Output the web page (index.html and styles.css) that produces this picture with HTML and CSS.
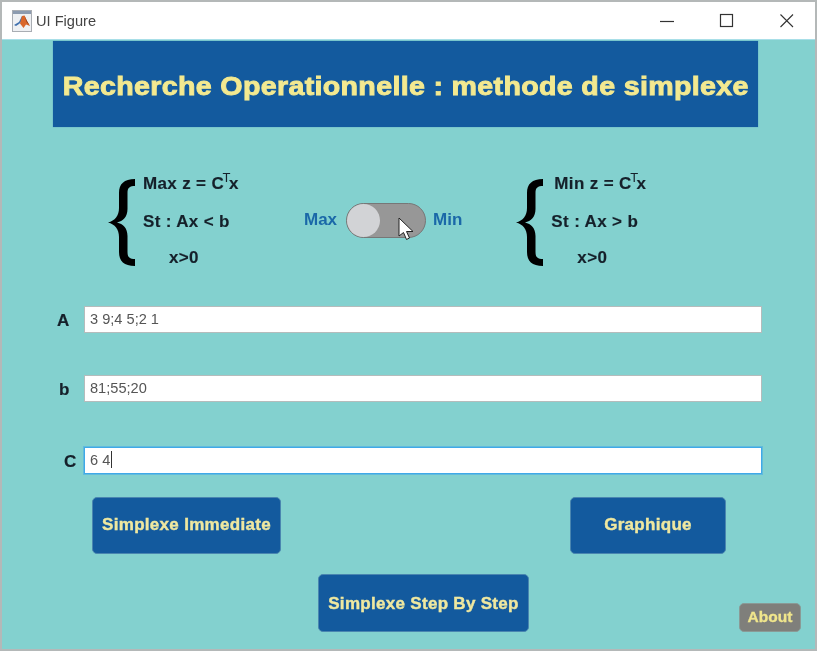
FILE: index.html
```html
<!DOCTYPE html>
<html lang="fr">
<head>
<meta charset="utf-8">
<title>UI Figure</title>
<link rel="stylesheet" href="styles.css">
</head>
<body>
<div class="window">
  <div class="titlebar">
    <svg class="app-icon" width="20" height="22" viewBox="0 0 20 22">
      <rect x="0.5" y="0.5" width="19" height="21" fill="#eef0f3" stroke="#a9adb3"/>
      <rect x="1" y="1" width="18" height="3" fill="#8c9bb0"/>
      <path d="M2 15 L7 12 L10 6 L12 9 L7 14 L4 16Z" fill="#3f6fae"/>
      <path d="M10 6 L12.5 5.5 L15 11 L18 16 L14 14.5 L11.5 18 L8 13.5Z" fill="#d9662a"/>
      <path d="M12.5 5.5 L15 11 L18 16 L14.5 12Z" fill="#8f3b16"/>
    </svg>
    <span class="title-text">UI Figure</span>
    <div class="controls">
      <svg class="ctl" width="16" height="16" viewBox="0 0 16 16"><path d="M1 8.5H15" stroke="#333" stroke-width="1.2"/></svg>
      <svg class="ctl" width="16" height="16" viewBox="0 0 16 16"><rect x="1.5" y="1.5" width="12" height="12" fill="none" stroke="#333" stroke-width="1.2"/></svg>
      <svg class="ctl" width="16" height="16" viewBox="0 0 16 16"><path d="M1.5 1.5L14 14M14 1.5L1.5 14" stroke="#333" stroke-width="1.1"/></svg>
    </div>
  </div>

  <header class="banner">
    <h1 class="banner-title">Recherche Operationnelle : methode de simplexe</h1>
  </header>

  <section class="problem">
    <div class="system system-max">
      <svg class="brace" width="29" height="91" viewBox="0 0 29 91"><path d="M28 2V9C23 9 20.5 10.5 20.5 16V32C20.5 40 16 44 10 45.5C16 47 20.5 51 20.5 59V75C20.5 80.5 23 82 28 82V89C17 89 12 84 12 75V60C12 52 8 47.5 1 45.5C8 43.5 12 39 12 31V16C12 7 17 2 28 2Z" fill="#000"/></svg>
      <div class="lines">
        <div class="line">Max z = C<sup class="sup">T</sup>x</div>
        <div class="line">St : Ax &lt; b</div>
        <div class="line line-pos">x&gt;0</div>
      </div>
    </div>
    <div class="switch-group">
      <span class="switch-label">Max</span>
      <div class="switch">
        <span class="knob"></span>
        <svg class="cursor" width="17" height="24" viewBox="0 0 17 24"><path d="M1 1V19L5.5 15.5L8.5 22.5L11.5 21L8.5 14.5H15Z" fill="#fff" stroke="#222" stroke-width="1"/></svg>
      </div>
      <span class="switch-label">Min</span>
    </div>
    <div class="system system-min">
      <svg class="brace" width="29" height="91" viewBox="0 0 29 91"><path d="M28 2V9C23 9 20.5 10.5 20.5 16V32C20.5 40 16 44 10 45.5C16 47 20.5 51 20.5 59V75C20.5 80.5 23 82 28 82V89C17 89 12 84 12 75V60C12 52 8 47.5 1 45.5C8 43.5 12 39 12 31V16C12 7 17 2 28 2Z" fill="#000"/></svg>
      <div class="lines">
        <div class="line line-first">Min z = C<sup class="sup">T</sup>x</div>
        <div class="line">St : Ax &gt; b</div>
        <div class="line line-pos">x&gt;0</div>
      </div>
    </div>
  </section>

  <section class="fields">
    <div class="field field-a"><label class="field-label label-a">A</label><div class="input">3 9;4 5;2 1</div></div>
    <div class="field field-b"><label class="field-label label-b">b</label><div class="input">81;55;20</div></div>
    <div class="field field-c"><label class="field-label label-c">C</label><div class="input input-focus">6 4<span class="caret"></span></div></div>
  </section>

  <section class="actions">
    <div class="action-row row-one">
      <button class="btn btn-immediate">Simplexe Immediate</button>
      <button class="btn btn-graph">Graphique</button>
    </div>
    <div class="action-row row-two">
      <button class="btn btn-step">Simplexe Step By Step</button>
      <button class="btn-about">About</button>
    </div>
  </section>
</div>
</body>
</html>
```
FILE: styles.css
```css
* { box-sizing: border-box; }
html, body { margin: 0; padding: 0; }
body { font-family: "Liberation Sans", Arial, sans-serif; }

.window {
  width: 817px;
  height: 651px;
  background: #83d1cf;
  border: 2px solid #b4b8b8;
  overflow: hidden;
  filter: blur(0.4px);
}

.titlebar {
  display: flex;
  align-items: center;
  height: 38px;
  background: #fff;
  border-bottom: 1px solid #a8dfe8;
  padding-left: 10px;
}
.app-icon { flex: none; }
.title-text { margin-left: 4px; font-size: 14.6px; color: #444; }
.controls { display: flex; margin-left: auto; gap: 44px; padding-right: 20px; }
.ctl { display: block; }

.banner {
  display: flex;
  align-items: center;
  justify-content: center;
  width: 705px;
  height: 86px;
  margin: 1px 0 0 51px;
  padding-top: 5px;
  background: #135a9e;
  box-shadow: 0 0 1px #4f93bb;
}
.banner-title {
  margin: 0;
  font-size: 26px;
  font-weight: 700;
  color: #f3e990;
  white-space: nowrap;
  letter-spacing: 0.3px;
  -webkit-text-stroke: 0.9px #f3e990;
  transform: scaleX(1.1);
}

.problem {
  display: flex;
  align-items: center;
  height: 100px;
  margin-top: 43px;
}

.system { display: flex; align-items: center; }
.system-max { margin-left: 105px; width: 197px; }
.system-min { margin-left: 53px; }
.brace { flex: none; margin-top: 4px; }
.lines { margin-left: 7px; }
.line {
  height: 37.5px;
  line-height: 40px;
  font-size: 17px;
  font-weight: 700;
  letter-spacing: 0.35px;
  color: #15202a;
  -webkit-text-stroke: 0.15px #15202a;
  white-space: nowrap;
}
.line-pos { padding-left: 26px; margin-top: -1px; }
.line-first { padding-left: 3px; }
.sup { font-size: 13px; font-weight: 400; line-height: 0; vertical-align: 7px; letter-spacing: 0; margin: 0 -1.5px; -webkit-text-stroke: 0; }

.switch-group { display: flex; align-items: center; }
.switch-label { font-size: 17px; font-weight: 700; color: #1a68a8; }
.switch {
  position: relative;
  width: 80px;
  height: 35px;
  margin: 1px 7px 0 9px;
  border: 1px solid #777;
  border-radius: 18px;
  background: #979797;
}
.knob {
  display: block;
  width: 33px;
  height: 33px;
  border-radius: 50%;
  background: #d2d3d6;
}
.cursor { position: absolute; left: 51px; top: 13px; }

.fields { margin-top: 36px; }
.field { display: flex; height: 27px; }
.field-b { margin-top: 42px; }
.field-c { margin-top: 45px; }
.field-label {
  width: 82px;
  line-height: 29px;
  font-size: 17px;
  font-weight: 700;
  color: #15202a;
  -webkit-text-stroke: 0.2px #15202a;
}
.label-a { padding-left: 55px; }
.label-b { padding-left: 57px; }
.label-c { padding-left: 62px; }
.input {
  width: 678px;
  height: 27px;
  padding-left: 5px;
  line-height: 25px;
  font-size: 14.6px;
  color: #555;
  background: #fff;
  border: 1px solid #b5bcbc;
}
.input-focus {
  border-color: #3fa9e8;
  box-shadow: 0 0 0 1px rgba(70, 170, 232, 0.55);
}
.caret {
  display: inline-block;
  width: 1px;
  height: 17px;
  margin-left: 1px;
  vertical-align: -3px;
  background: #333;
}

.actions { margin-top: 23px; }
.action-row { display: flex; }
.row-two { align-items: flex-end; margin-top: 20px; }
.btn {
  height: 57px;
  padding: 0 0 2px;
  font-family: inherit;
  font-size: 17px;
  font-weight: 700;
  letter-spacing: 0.3px;
  color: #efe8a0;
  -webkit-text-stroke: 0.4px #efe8a0;
  background: #135a9e;
  border: 1px solid #4a86b0;
  border-radius: 5px;
}
.btn-immediate { width: 189px; margin-left: 90px; }
.btn-graph { width: 156px; margin-left: 289px; }
.btn-step { width: 211px; height: 58px; margin-left: 316px; padding: 2px 0 0; }
.btn-about {
  width: 62px;
  height: 29px;
  margin-left: 210px;
  padding: 0 0 2px;
  font-family: inherit;
  font-size: 15.5px;
  font-weight: 700;
  color: #f0e68c;
  -webkit-text-stroke: 0.3px #f0e68c;
  background: #7f7f7b;
  border: 1px solid #8a9a96;
  border-radius: 5px;
}
```
